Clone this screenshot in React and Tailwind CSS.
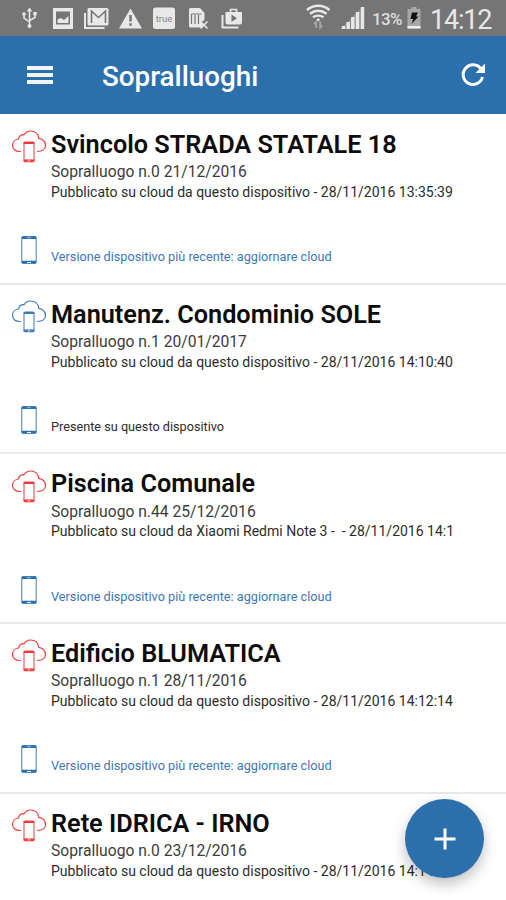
import React from 'react';

const SYNC = 'Versione dispositivo più recente: aggiornare cloud';

const surveys = [
  { title: 'Svincolo STRADA STATALE 18', info: 'Sopralluogo n.0 21/12/2016', cloud: 'Pubblicato su cloud da questo dispositivo - 28/11/2016 13:35:39', status: SYNC, synced: false },
  { title: 'Manutenz. Condominio SOLE', info: 'Sopralluogo n.1 20/01/2017', cloud: 'Pubblicato su cloud da questo dispositivo - 28/11/2016 14:10:40', status: 'Presente su questo dispositivo', synced: true },
  { title: 'Piscina Comunale', info: 'Sopralluogo n.44 25/12/2016', cloud: 'Pubblicato su cloud da Xiaomi Redmi Note 3 -  - 28/11/2016 14:1', status: SYNC, synced: false },
  { title: 'Edificio BLUMATICA', info: 'Sopralluogo n.1 28/11/2016', cloud: 'Pubblicato su cloud da questo dispositivo - 28/11/2016 14:12:14', status: SYNC, synced: false },
  { title: 'Rete IDRICA - IRNO', info: 'Sopralluogo n.0 23/12/2016', cloud: 'Pubblicato su cloud da questo dispositivo - 28/11/2016 14:14:02', status: null, synced: false },
];

function CloudIcon({ className }) {
  return (
    <svg viewBox="0 0 36 34" className={className} fill="none" stroke="currentColor">
      <path d="M9.500 22.500C4.500 22.800 1.500 20 1.500 16.500C1.500 13 4 10.300 7.500 10C8 7 10.500 5.300 13 5.800C14.500 3.300 17 2 19.500 2C24 2 27.300 5 27.800 9.300C31.800 10 34.500 13 34.500 16.800C34.500 20 31.500 22.500 26.500 22.500" strokeWidth="1.200" strokeLinecap="round" />
      <rect x="13" y="13" width="10" height="19.800" rx="1" strokeWidth="1" />
      <path d="M12.700 14h10.600M12.700 31.700h4M19.300 31.700h4" strokeWidth="2.200" />
      <path d="M15.500 31h5" strokeWidth="1" />
    </svg>
  );
}

function PhoneIcon() {
  return (
    <svg viewBox="0 0 16 28" className="h-7 w-4 text-[#2b70ad]" fill="none" stroke="currentColor">
      <rect x="0.800" y="0.600" width="14.400" height="26.800" rx="1.200" strokeWidth="0.900" />
      <path d="M0.800 1.800h14.400M0.800 26h5.200M10 26h5.200" strokeWidth="2.600" />
      <path d="M5 25.400h6" strokeWidth="1.200" />
      <path d="M6 1.700h4" stroke="#b9d4ea" strokeWidth="0.800" />
    </svg>
  );
}

function StatusBar() {
  return (
    <div className="flex h-9 items-start bg-[#757575] text-[#e8e8e8]">
      <svg viewBox="0 0 250 36" className="h-9 w-[250px] shrink-0" fill="currentColor">
        {/* usb */}
        <g fill="none" stroke="currentColor" strokeWidth="1.500">
          <path d="M29.500 10v16M24 13.500v4.500l5.500 4M35 13v4.500l-5.500 3" />
        </g>
        <path d="M26.700 11.500l2.800-4 2.800 4z" />
        <circle cx="29.500" cy="26" r="2" />
        <circle cx="24" cy="14" r="1.800" />
        <path d="M33.300 12h3.400v3.400h-3.400z" />
        {/* picture */}
        <path fillRule="evenodd" d="M53 8h20v21H53zM56 11.500v13h14v-13z" />
        <path d="M57.500 23v-3.500l3.500-1.500 3 2 4.500-4v7z" />
        {/* mail */}
        <path d="M85 13v15h19.500" fill="none" stroke="currentColor" strokeWidth="2" />
        <rect x="87.500" y="8" width="21" height="17.500" rx="1.500" />
        <path d="M91.500 23V11l7 6.500 7-6.500v12" fill="none" stroke="#757575" strokeWidth="1.600" />
        {/* warning */}
        <path d="M130.500 8.500L142 28.500H119z" />
        <path d="M129.300 15h2.500v6.500h-2.500zM129.300 23.300h2.500v2.500h-2.500z" fill="#757575" />
        {/* true */}
        <rect x="153" y="7.500" width="22" height="21.500" rx="2.500" />
        <text x="164" y="21.500" textAnchor="middle" fontSize="9.500" fill="#858585" className="font-[Roboto,sans-serif]">true</text>
        {/* sim card */}
        <path d="M190.500 8h9.500l4.500 5v7l-3 2 2 3-2 2.500h-11a1.500 1.500 0 0 1-1.500-1.500V9.500A1.500 1.500 0 0 1 190.500 8z" />
        <path d="M191.500 14h10M191.500 14v10M195 15v9M198.500 15v9" fill="none" stroke="#757575" strokeWidth="1.200" />
        <path d="M200.500 21.500l7 7M207.500 21.500l-7 7" fill="none" stroke="currentColor" strokeWidth="1.600" />
        {/* play store */}
        <path d="M222.500 15v12.500h16" fill="none" stroke="currentColor" strokeWidth="2" />
        <path fillRule="evenodd" d="M225.500 12h16.500v10.500a2 2 0 0 1-2 2h-12.500a2 2 0 0 1-2-2zM231.500 14.500v7.500l5.500-3.700z" />
        <path d="M230.500 12V9.500h6V12" fill="none" stroke="currentColor" strokeWidth="1.600" />
      </svg>
      <svg viewBox="0 0 64 36" className="ml-[52px] h-9 w-16 shrink-0" fill="none" stroke="currentColor">
        {/* wifi */}
        <path d="M5 10C11.500 4.300 21 4.300 27.500 10M8 13.800C13 9.800 19.500 9.800 24.500 13.800M11 17.300C14 15 18.500 15 21.500 17.300" strokeWidth="2.400" />
        <circle cx="16.200" cy="19.800" r="1.500" fill="currentColor" stroke="none" />
        <path d="M14.200 28v-6l-2.200 2.200M18.200 21.500v6l2.200-2.200" stroke="#a4a4a4" strokeWidth="2" />
        {/* signal */}
        <path d="M41.500 29v-3M46.200 29v-7M50.800 29V17M55.500 29V12M60.500 29V7" strokeWidth="3.400" />
        <path d="M39 28.500L61 6.500V29H39z" fill="currentColor" stroke="none" opacity="0.250" />
      </svg>
      <span className="mt-[9px] ml-[6px] w-[32px] text-[17px] leading-[20px] font-medium tracking-[-0.700px] text-[#dedede]">13%</span>
      <svg viewBox="0 0 16 24" className="mt-[6px] ml-[2px] h-6 w-4 shrink-0">
        <path d="M5.500 1h5v2h4v19.500H1.500V3h4z" fill="#a8a8a8" />
        <path d="M1.500 20h13v2.500h-13z" fill="#eeeeee" />
        <path d="M6 6.500h6l-2 4h2.500L5.500 18l1.800-5H4.500z" fill="#111111" />
      </svg>
      <span className="mt-[5px] ml-[8px] text-[27px] leading-[30px] tracking-[-1.200px]">14:12</span>
    </div>
  );
}

function Toolbar() {
  return (
    <header className="flex h-[78px] items-center bg-[#2b70ad] pr-[19px] pl-[27px] text-white">
      <div className="flex w-[26px] flex-col gap-[3px]">
        <span className="h-1 bg-[#eef4fa]" />
        <span className="h-1 bg-[#eef4fa]" />
        <span className="h-1 bg-[#eef4fa]" />
      </div>
      <h1 className="ml-[49px] flex-1 pt-[3px] text-[27.800px] font-medium">Sopralluoghi</h1>
      <svg viewBox="0 0 28 28" className="h-7 w-7" fill="none" stroke="currentColor">
        <path d="M22 8A9.800 9.800 0 1 0 23.500 16" strokeWidth="3" />
        <path d="M26 2.500v9.500h-9.500z" fill="currentColor" stroke="none" />
      </svg>
    </header>
  );
}

function SurveyRow({ item }) {
  return (
    <li className="flex h-[169.700px] shrink-0 border-b-2 border-[#e9e9e9]">
      <div className="flex w-[51px] shrink-0 flex-col">
        <CloudIcon className={item.synced ? 'mt-[14.500px] ml-[11px] h-[34px] w-9 text-[#3b7ab5]' : 'mt-[14.500px] ml-[11px] h-[34px] w-9 text-[#ee3a3a]'} />
        {item.status && <div className="mt-[73px] ml-[21px]"><PhoneIcon /></div>}
      </div>
      <div className="flex flex-col whitespace-pre">
        <h2 className="mt-[14px] text-[25.250px] leading-8 font-semibold text-[#0c0c0c]">{item.title}</h2>
        <p className="mt-[1.500px] text-[15.650px] leading-5 text-[#3c3c3c]">{item.info}</p>
        <p className="mt-[0.500px] text-[14px] leading-[18px] text-[#2c2c2c]">{item.cloud}</p>
        {item.status && (
          <p className={item.synced ? 'mt-[48.500px] text-[12.700px] leading-4 text-[#2c2c2c]' : 'mt-[48.500px] text-[12.700px] leading-4 text-[#3c78b8]'}>{item.status}</p>
        )}
      </div>
    </li>
  );
}

export default function App() {
  return (
    <div className="relative flex h-[900px] w-[506px] flex-col overflow-hidden bg-white font-[Roboto,sans-serif]">
      <StatusBar />
      <Toolbar />
      <ul className="flex min-h-0 flex-1 flex-col overflow-hidden pt-[0.900px]">
        {surveys.map((s) => <SurveyRow key={s.title} item={s} />)}
      </ul>
      {/* Add button */}
      <button className="absolute right-[22px] bottom-[22px] grid h-[79px] w-[79px] place-items-center rounded-full bg-[#2b70ad] shadow-[0_6px_14px_rgba(0,0,0,0.250)]">
        <svg viewBox="0 0 22 22" className="h-[22px] w-[22px]" stroke="white" strokeWidth="3">
          <path d="M11 0.500v21M0.500 11h21" />
        </svg>
      </button>
    </div>
  );
}
